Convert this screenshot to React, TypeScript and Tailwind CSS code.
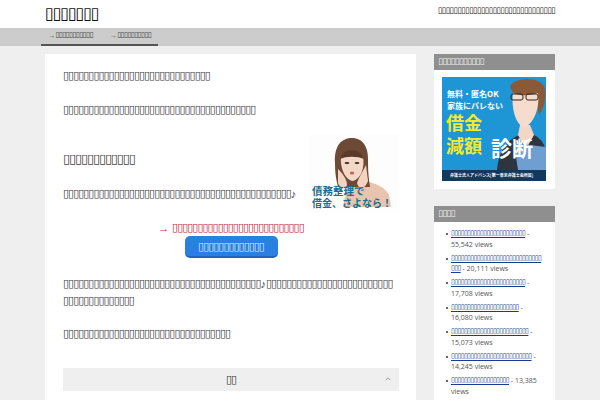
function T({ n }: { n: number }) {
  return <span className="font-['DejaVu_Sans',sans-serif] tracking-[-0.09em] leading-none align-[1px]">{'▯'.repeat(n)}</span>
}

const POPULAR = [
  { link: 23, views: '55,542 views' },
  { link: 28, extra: 3, views: '20,111 views' },
  { link: 23, views: '17,708 views' },
  { link: 21, views: '16,080 views' },
  { link: 24, views: '15,073 views' },
  { link: 25, views: '14,245 views' },
  { link: 18, views: '13,385 views' },
]

function WomanPhoto() {
  return (
    <div className="float-right relative w-[90px] h-[77px] mt-[17px] bg-[#fdfdfd] overflow-hidden font-['Noto_Sans_CJK_JP',sans-serif] font-bold">
      <svg viewBox="0 0 90 77" className="w-full h-full">
        <path d="M56 46 C66 48 76 52 80 60 L82 72 L34 72 L38 52 Z" fill="#e8c4af" />
        <path d="M26 28 C25 10 33 3 43 3 C54 3 60 12 59 28 C59 38 60 46 61 52 L29 52 C27 44 26 38 26 28 Z" fill="#6d4a36" />
        <path d="M32 22 C36 18 51 18 54 22 C56 32 52 44 44 46 C36 45 31 33 32 22 Z" fill="#f3d8c7" />
        <path d="M31 24 C34 12 51 12 55 24 C48 21 38 21 31 24 Z" fill="#5b3c2b" />
        <ellipse cx="38" cy="28" rx="2.4" ry="1" fill="#3a2a22" />
        <ellipse cx="48" cy="28" rx="2.4" ry="1" fill="#3a2a22" />
        <ellipse cx="43" cy="38" rx="2.2" ry="1.5" fill="#b9655c" />
        <path d="M29 34 C33 38 38 44 38 50 C36 56 31 54 29 48 Z" fill="#f3d3c0" />
        <path d="M57 30 C54 36 50 42 48 48 C50 56 56 54 59 46 Z" fill="#f3d3c0" />
      </svg>
      <div className="absolute left-[3px] top-[50px] text-[10.5px] leading-[12px] text-[#1d6d8e] whitespace-nowrap">債務整理で</div>
      <div className="absolute left-[3px] top-[62px] text-[10px] leading-[12px] text-[#1d6d8e] whitespace-nowrap">借金、さよなら！</div>
    </div>
  )
}

function Banner() {
  return (
    <div className="relative w-[104px] h-[104px] bg-[#1e96d6] overflow-hidden font-['Noto_Sans_CJK_JP',sans-serif] font-bold">
      <svg viewBox="0 0 104 104" className="absolute inset-0 w-full h-full">
        <path d="M55 93 C57 72 66 62 78 58 L92 58 C100 62 103 68 104 76 L104 93 Z" fill="#2c3540" />
        <path d="M76 58 L84 72 L92 58 L88 48 L78 48 Z" fill="#f2d6c6" />
        <path d="M68 10 C70 0 100 -2 103 12 C105 24 100 34 97 38 L94 20 L72 18 Z" fill="#8a5a38" />
        <path d="M71 16 C80 20 90 18 96 16 C98 30 92 48 82 50 C74 48 69 32 71 16 Z" fill="#f5dccd" />
        <rect x="69" y="17" width="12" height="6" rx="2" fill="none" stroke="#33231d" strokeWidth="1" />
        <rect x="84" y="17" width="12" height="6" rx="2" fill="none" stroke="#33231d" strokeWidth="1" />
        <path d="M72 66 L104 70 L104 93 L76 93 Z" fill="#6f9fd0" />
        <rect x="0" y="93" width="104" height="11" fill="#10395c" />
      </svg>
      <div className="absolute left-[5px] top-[12px] text-[8px] leading-[10px] text-white whitespace-nowrap">無料・匿名OK</div>
      <div className="absolute left-[5px] top-[24px] text-[8px] leading-[10px] text-white whitespace-nowrap">家族にバレない</div>
      <div className="absolute left-[4px] top-[34px] text-[18px] leading-[23px] text-[#f7e92a] whitespace-nowrap">借金</div>
      <div className="absolute left-[4px] top-[57px] text-[18px] leading-[23px] text-[#f7e92a] whitespace-nowrap">減額</div>
      <div className="absolute left-[49px] top-[59px] text-[21px] leading-[23px] text-white whitespace-nowrap">診断</div>
      <div className="absolute left-[8px] top-[95px] text-[4px] leading-[7px] text-white whitespace-nowrap">弁護士法人アドバンス[第一東京弁護士会所属]</div>
    </div>
  )
}

export default function App() {
  return (
    <div className="h-[400px] overflow-hidden bg-[#efefef] font-['Open_Sans',sans-serif] text-[#3a3a3a] opacity-[.995]">
      <header className="h-[28px] bg-white flex items-center justify-between pl-[45px] pr-[45px]">
        <div className="text-[16.6px] leading-none text-[#111]"><T n={7} /></div>
        <div className="text-[8.5px] leading-none text-[#222] mb-[6px]"><T n={30} /></div>
      </header>

      <nav className="h-[18px] bg-[#cccccc] pl-[41px]">
        <div className="w-[117px] h-[18px] border-b-2 border-[#555] flex items-center gap-[17px] pl-[7px] text-[7.4px] text-[#444] whitespace-nowrap">
          <span>→<T n={11} /></span>
          <span>→<T n={10} /></span>
        </div>
      </nav>

      <div className="flex gap-[18px] pl-[45px] pt-[8px]">
        <main className="w-[371px] bg-white pl-[18px] pr-[17px] pt-[13px] text-[11px] leading-[17px] h-[346px]">
          <p><T n={29} /></p>
          <p className="mt-[17px]"><T n={38} /></p>
          <WomanPhoto />
          <h2 className="pt-[32px] text-[13px] leading-[18px] text-[#444]"><T n={12} /></h2>
          <p className="mt-[17px]"><T n={45} />♪</p>
          <p className="mt-[17px] text-center text-[#c0273a]">→ <T n={26} /></p>
          <div className="flex justify-center">
            <a className="w-[93px] h-[22px] flex items-center justify-center rounded-[5px] bg-[#2b7fe0] border-b-2 border-[#1e66bb] text-[#dfeaf8] underline"><T n={13} /></a>
          </div>
          <p className="mt-[17px]"><T n={39} />♪<T n={25} /><br /><T n={14} /></p>
          <p className="mt-[16px]"><T n={33} /></p>
          <div className="mt-[26px] border border-[#efefef]">
            <div className="h-[21px] bg-[#efefef] flex items-center justify-center relative text-[#333]">
              <T n={2} />
              <svg viewBox="0 0 10 6" className="absolute right-[7px] top-[8px] w-[6px] h-[4px]" fill="none" stroke="#888" strokeWidth="1.4"><path d="M1 5 L5 1 L9 5" /></svg>
            </div>
          </div>
        </main>

        <aside className="w-[121px]">
          <section className="bg-white">
            <h3 className="h-[16px] bg-[#8f8f8f] pl-[4px] flex items-center text-[9px] text-[#eee]"><span><T n={11} /></span></h3>
            <div className="pl-[8px] pt-[7px] pb-[8px]"><Banner /></div>
          </section>
          <section className="bg-white mt-[17px] h-[200px]">
            <h3 className="h-[16px] bg-[#8f8f8f] pl-[4px] flex items-center text-[9px] text-[#eee]"><span><T n={4} /></span></h3>
            <ul className="pl-[11.5px] pr-[9px] pt-[7px] text-[7px] leading-[10.5px] text-[#555]">
              {POPULAR.map(p => (
                <li key={p.views} className="flex gap-[3.5px] mb-[3.5px]">
                  <span className="shrink-0 w-[2px] h-[2px] mt-[4px] rounded-full bg-[#333]" />
                  <div>
                    <a className="text-[#1b3a8c] underline"><T n={p.link} />{p.extra ? <br /> : null}{p.extra ? <T n={p.extra} /> : null}</a> - {p.views}
                  </div>
                </li>
              ))}
            </ul>
          </section>
        </aside>
      </div>
    </div>
  )
}
